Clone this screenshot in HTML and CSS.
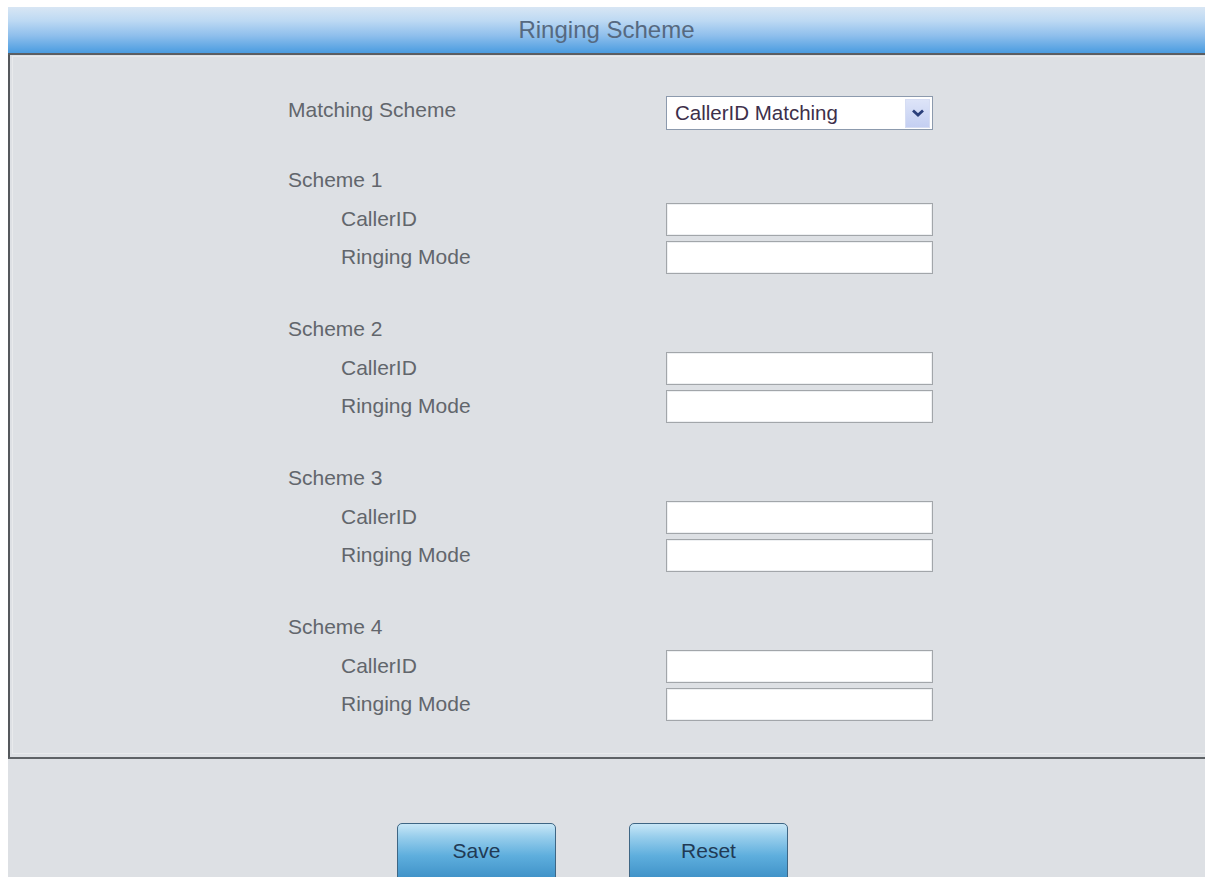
FILE: index.html
```html
<!DOCTYPE html>
<html lang="en">
<head>
<meta charset="utf-8">
<title>Ringing Scheme</title>
<link rel="stylesheet" href="styles.css">
</head>
<body>
<div class="page">
  <div class="header">Ringing Scheme</div>
  <div class="panel">
    <div class="inner">
      <div class="row row-top">
        <span class="label">Matching Scheme</span>
        <div class="select">
          <span class="select-text">CallerID Matching</span>
          <span class="select-btn">
            <svg width="14" height="10" viewBox="0 0 14 10"><path d="M2 2.5 L7 7 L12 2.5" fill="none" stroke="#2b3f7a" stroke-width="2.8"/></svg>
          </span>
        </div>
      </div>

      <div class="scheme">
        <div class="scheme-title">Scheme 1</div>
        <div class="row"><span class="label sub">CallerID</span><input class="field" type="text"></div>
        <div class="row"><span class="label sub">Ringing Mode</span><input class="field" type="text"></div>
      </div>
      <div class="scheme">
        <div class="scheme-title">Scheme 2</div>
        <div class="row"><span class="label sub">CallerID</span><input class="field" type="text"></div>
        <div class="row"><span class="label sub">Ringing Mode</span><input class="field" type="text"></div>
      </div>
      <div class="scheme">
        <div class="scheme-title">Scheme 3</div>
        <div class="row"><span class="label sub">CallerID</span><input class="field" type="text"></div>
        <div class="row"><span class="label sub">Ringing Mode</span><input class="field" type="text"></div>
      </div>
      <div class="scheme">
        <div class="scheme-title">Scheme 4</div>
        <div class="row"><span class="label sub">CallerID</span><input class="field" type="text"></div>
        <div class="row"><span class="label sub">Ringing Mode</span><input class="field" type="text"></div>
      </div>
    </div>
  </div>
  <div class="actions">
    <button class="btn" type="button">Save</button>
    <button class="btn" type="button">Reset</button>
  </div>
</div>
</body>
</html>
```

FILE: styles.css
```css
html, body {
  margin: 0;
  padding: 0;
  background: #ffffff;
  overflow: hidden;
}

body {
  font-family: "Liberation Sans", Arial, sans-serif;
  color: #62666c;
}

.page {
  margin: 7px 0 0 8px;
  width: 1205px;
  background: #dde0e4;
  height: 900px;
}

/* title bar */
.header {
  height: 46px;
  line-height: 46px;
  text-align: center;
  font-size: 24px;
  color: #566980;
  padding-right: 8px;
  background: linear-gradient(to bottom, #d8e6f4 0%, #bdd9f3 30%, #8fbfec 62%, #4a9ce0 100%);
  border-bottom: 2px solid #5b5e62;
}

.panel {
  border-left: 2px solid #55585c;
  border-bottom: 2px solid #5e6266;
  padding: 1px 0 3px 2px;
}

.inner {
  border: 1px solid #e8eaec;
  border-right: none;
  padding: 37px 0 30px 275px;
}

.row {
  display: flex;
  align-items: center;
  height: 38px;
}

.label {
  width: 378px;
  font-size: 21px;
  color: #62666c;
}

.label.sub {
  padding-left: 53px;
  width: 325px;
}

.row-top {
  margin-bottom: 28px;
}

.row-top .label {
  margin-top: -6px;
}

/* drop-down */
.select {
  width: 267px;
  height: 34px;
  box-sizing: border-box;
  border: 1px solid #8c9aad;
  background: #ffffff;
  display: flex;
  align-items: center;
  justify-content: space-between;
  padding: 0 2px 0 8px;
}

.select-text {
  font-size: 20.5px;
  color: #3d2f4a;
}

.select-btn {
  width: 25px;
  height: 29px;
  background: linear-gradient(to bottom, #dde4f8, #c4cff2);
  border: 1px solid #d6ddf3;
  box-sizing: border-box;
  display: flex;
  align-items: center;
  justify-content: center;
}

.scheme {
  margin-bottom: 33px;
}

.scheme:last-child {
  margin-bottom: 0;
}

.scheme-title {
  height: 40px;
  line-height: 40px;
  font-size: 21px;
  color: #62666c;
}

.field {
  width: 267px;
  height: 33px;
  box-sizing: border-box;
  margin: 0;
  border: 1px solid #a2a6aa;
  box-shadow: inset 0 0 0 1px #eef0f2;
  background: #ffffff;
  outline: none;
}

/* form buttons */
.actions {
  display: flex;
  gap: 73px;
  padding: 64px 0 0 389px;
}

.btn {
  width: 159px;
  height: 60px;
  padding: 0 0 4px 0;
  border: 1px solid #3e6684;
  border-radius: 5px;
  background: linear-gradient(to bottom, #c8e7f7 0%, #98ceec 22%, #5eaedd 55%, #3a8dc4 100%);
  font-family: "Liberation Sans", Arial, sans-serif;
  font-size: 21px;
  color: #213a55;
}
```
